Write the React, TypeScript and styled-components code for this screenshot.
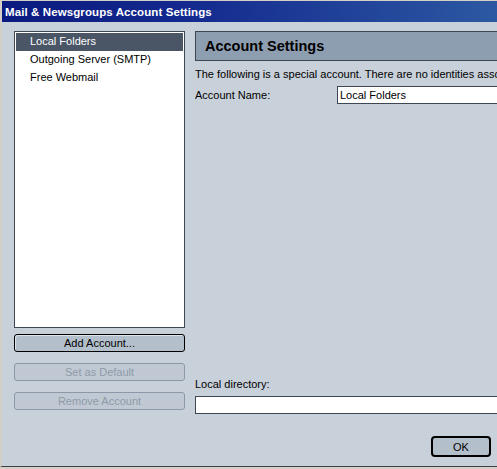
import React from "react";
import styled, { createGlobalStyle, css } from "styled-components";

const Global = createGlobalStyle`
  html, body { margin: 0; padding: 0; background: #d4d0c8; }
  body { width: 497px; height: 469px; overflow: hidden; font-family: "Liberation Sans", Arial, sans-serif; }
`;

const Window = styled.div`
  width: 497px;
  height: 467px;
  box-sizing: border-box;
  border-left: 2px solid #d4d0c8;
  border-top: 1px solid #d4d0c8;
  border-bottom: 1px solid #404040;
  background: #c8d0d9;
  display: flex;
  flex-direction: column;
  overflow: hidden;
`;

const TitleBar = styled.div`
  height: 21px;
  flex: none;
  display: flex;
  align-items: center;
  padding-left: 3px;
  background: linear-gradient(to right, #0a1a80 0%, #13288e 35%, #2c58a2 100%);
  color: #fff;
  font-weight: bold;
  font-size: 11.5px;
  letter-spacing: 0.1px;
`;

const Body = styled.div`
  flex: 1;
  display: flex;
  gap: 10px;
  padding: 9px 0 0 12px;
  min-height: 0;
`;

const LeftCol = styled.div`
  width: 171px;
  flex: none;
  display: flex;
  flex-direction: column;
`;

const List = styled.div`
  height: 297px;
  box-sizing: border-box;
  border: 1px solid #3c4654;
  background: #fff;
  padding: 1px;
  margin-bottom: 6px;
`;

const Item = styled.div<{ $selected?: boolean }>`
  height: 18px;
  line-height: 16px;
  padding-left: 14px;
  font-size: 11px;
  color: #000;
  ${(p) =>
    p.$selected &&
    css`
      background: #4a5566;
      color: #fff;
    `}
`;

const Button = styled.button<{ $disabled?: boolean }>`
  height: 18px;
  box-sizing: border-box;
  border: 1px solid ${(p) => (p.$disabled ? "#8c98a8" : "#000")};
  border-radius: 3px;
  background: ${(p) => (p.$disabled ? "#c0c9d3" : "#b4bfcc")};
  color: ${(p) => (p.$disabled ? "#8f9aa8" : "#000")};
  font-family: "Liberation Sans", Arial, sans-serif;
  font-size: 11px;
  padding: 0;
  margin: 0 0 11px 0;
  box-shadow: ${(p) => (p.$disabled ? "none" : "inset 1px 1px 0 #dfe4ea")};
`;

const RightCol = styled.div`
  flex: 1;
  display: flex;
  flex-direction: column;
  min-width: 0;
  overflow: hidden;
`;

const Header = styled.div`
  height: 30px;
  box-sizing: border-box;
  width: 320px;
  flex: none;
  border: 1px solid #3c4654;
  border-right: none;
  background: #8e9eb1;
  display: flex;
  align-items: center;
  padding-left: 9px;
  font-size: 14.5px;
  font-weight: bold;
  color: #000;
  margin-bottom: 6px;
`;

const Text = styled.div`
  font-size: 11px;
  white-space: nowrap;
  height: 14px;
  line-height: 14px;
  margin-bottom: 5px;
`;

const FieldRow = styled.div`
  display: flex;
  align-items: center;
  height: 18px;
`;

const Label = styled.div`
  width: 142px;
  flex: none;
  font-size: 11px;
`;

const Input = styled.div<{ $wide?: boolean }>`
  flex: none;
  width: ${(p) => (p.$wide ? "320px" : "180px")};
  height: 18px;
  box-sizing: border-box;
  border: 1px solid #3c4654;
  border-right: none;
  background: #fff;
  font-size: 11px;
  line-height: 16px;
  padding-left: 2px;
`;

const Spacer = styled.div`
  flex: 1;
`;

const Footer = styled.div`
  display: flex;
  justify-content: flex-end;
  padding: 22px 6px 9px 0;
`;

const OkButton = styled.button`
  width: 60px;
  height: 21px;
  box-sizing: border-box;
  border: 2px solid #000;
  border-radius: 4px;
  background: #b4bfcc;
  font-family: "Liberation Sans", Arial, sans-serif;
  font-size: 11px;
  padding: 0;
`;

export default function App() {
  return (
    <>
      <Global />
      <Window>
        <TitleBar>Mail &amp; Newsgroups Account Settings</TitleBar>
        <Body>
          <LeftCol>
            <List>
              <Item $selected>Local Folders</Item>
              <Item>Outgoing Server (SMTP)</Item>
              <Item>Free Webmail</Item>
            </List>
            <Button>Add Account...</Button>
            <Button $disabled>Set as Default</Button>
            <Button $disabled>Remove Account</Button>
          </LeftCol>
          <RightCol>
            <Header>Account Settings</Header>
            <Text>The following is a special account. There are no identities associated with it.</Text>
            <FieldRow>
              <Label>Account Name:</Label>
              <Input>Local Folders</Input>
            </FieldRow>
            <Spacer />
            <Text>Local directory:</Text>
            <Input $wide />
            <Footer>
              <OkButton>OK</OkButton>
            </Footer>
          </RightCol>
        </Body>
      </Window>
    </>
  );
}
